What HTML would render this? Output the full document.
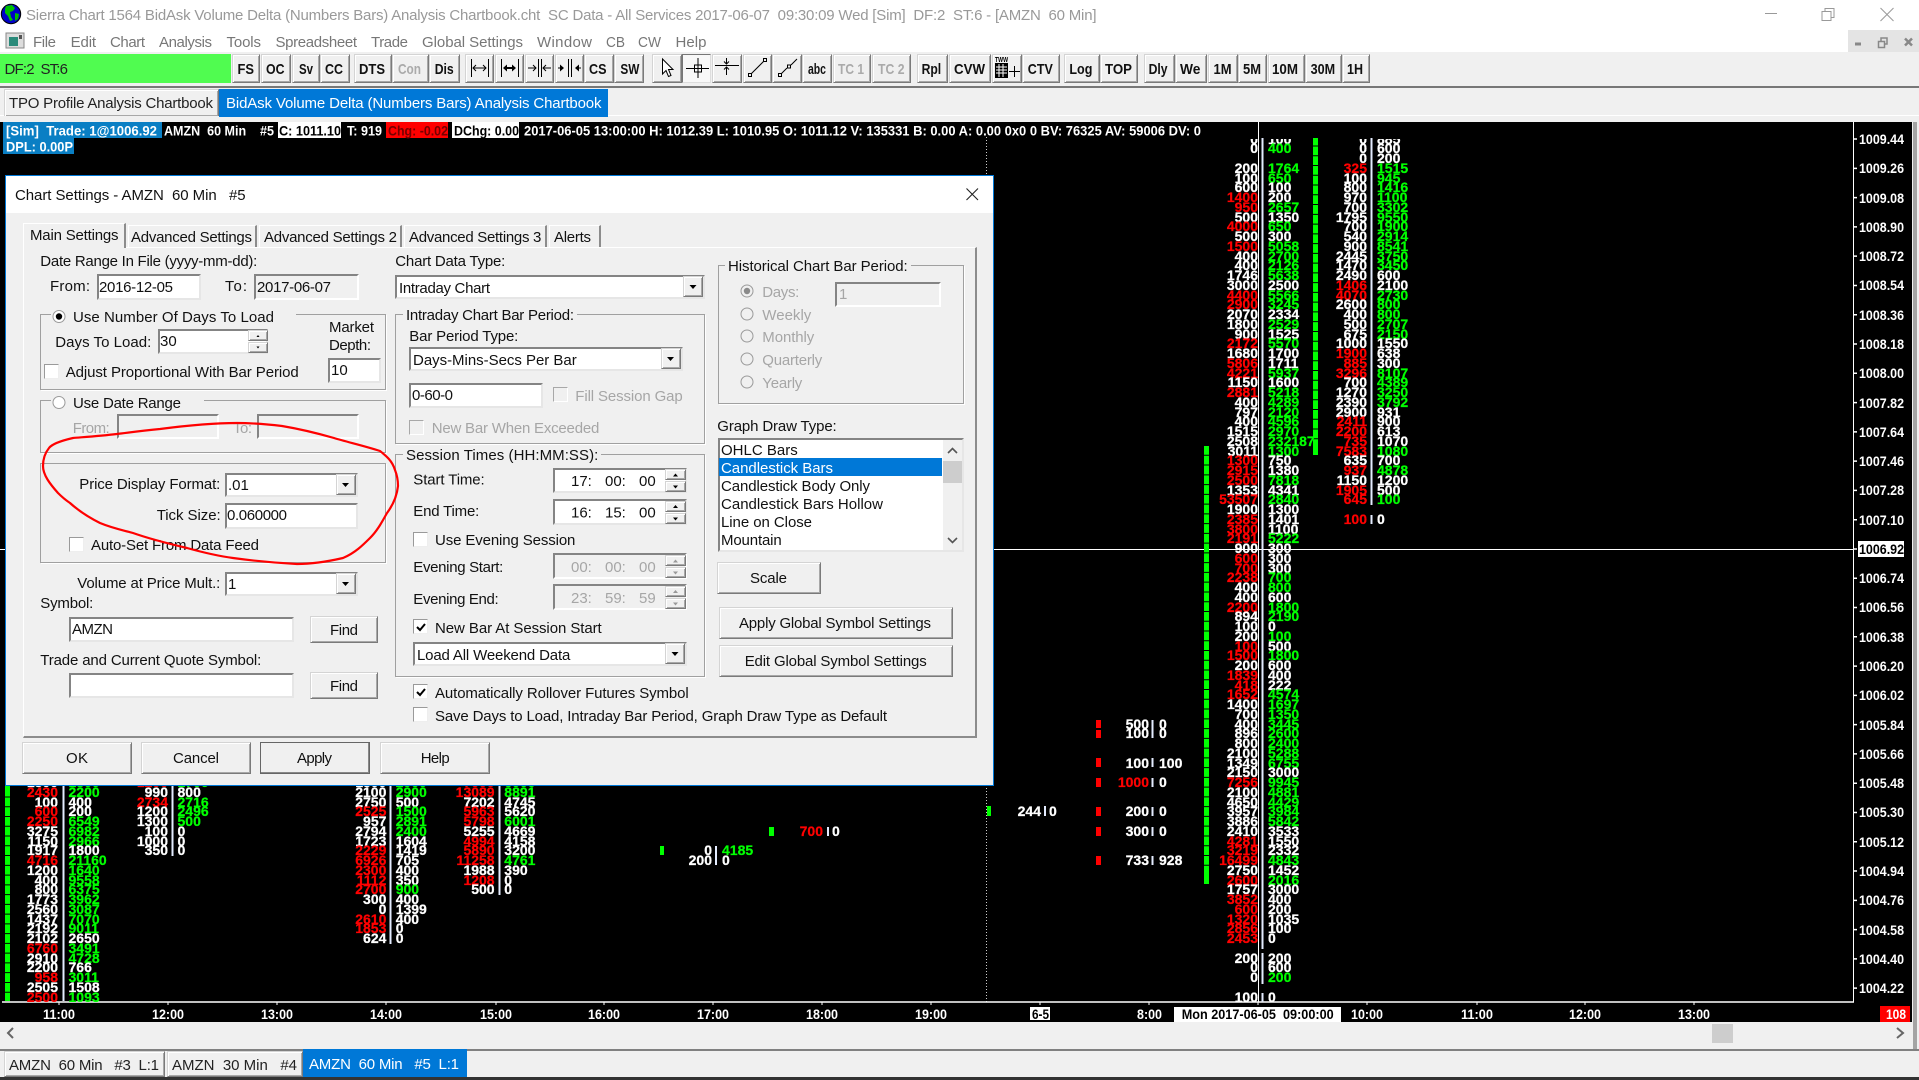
<!DOCTYPE html>
<html><head><meta charset="utf-8"><title>Sierra Chart</title>
<style>
html,body{margin:0;padding:0}
body{width:1919px;height:1080px;overflow:hidden;background:#f0f0f0;position:relative;font-family:"Liberation Sans",sans-serif}
div,svg,pre{position:absolute;box-sizing:border-box;margin:0}
svg{left:0;top:0}
svg text{white-space:pre}
.b{background:#f0f0f0;border:1px solid;border-color:#d4d4d4 #7a7a7a #7a7a7a #d4d4d4;box-shadow:inset 1px 1px 0 #fff,inset -1px -1px 0 #a8a8a8}
.i{background:#fff;border:2px solid;border-color:#848484 #e6e6e6 #e6e6e6 #848484}
.j{background:#f0f0f0;border:2px solid;border-color:#848484 #fff #fff #848484}
.g{border:1px solid #a0a0a0;box-shadow:1px 1px 0 #fff}
.f{background:#f0f0f0}
.c{background:#fff;border:1px solid;border-color:#9a9a9a #eee #eee #9a9a9a;width:15px;height:15px}
.x{background:#f0f0f0;border:1px solid;border-color:#a8a8a8 #fff #fff #a8a8a8;width:15px;height:15px}
.k{background:#fff;width:2px}
pre{font:bold 14px/9.75px "Liberation Sans",sans-serif;color:#fff;white-space:pre;-webkit-text-stroke:.25px currentColor}
pre.r{width:80px;text-align:right}
pre i{font-style:normal;color:#f00}
pre b{color:#0f0}
.t{font:bold 15px "Liberation Sans",sans-serif;fill:#111}
.s{font:bold 14px "Liberation Sans",sans-serif;fill:#fff}
.u{font:15px "Liberation Sans",sans-serif;fill:#111}
.u.d{fill:#a6a6a6}
</style></head><body>

<!-- chrome background -->
<div style="left:0;top:0;width:1919px;height:52px;background:#fff"></div>
<div style="left:1848px;top:30px;width:71px;height:22px;background:#e4e4e4"></div>
<div style="left:0;top:86px;width:1919px;height:2px;background:#777"></div>
<div style="left:0;top:115px;width:1919px;height:1px;background:#fff"></div>
<div style="left:0;top:54px;width:231px;height:29px;background:#50fc50"></div>

<!-- toolbar buttons -->
<div class="b" style="left:232px;top:54px;width:28px;height:29px"></div>
<div class="b" style="left:261px;top:54px;width:30px;height:29px"></div>
<div class="b" style="left:292px;top:54px;width:28px;height:29px"></div>
<div class="b" style="left:320px;top:54px;width:30px;height:29px"></div>
<div class="b" style="left:354px;top:54px;width:38px;height:29px"></div>
<div class="b" style="left:392px;top:54px;width:37px;height:29px"></div>
<div class="b" style="left:429px;top:54px;width:31px;height:29px"></div>
<div class="b" style="left:465px;top:54px;width:29px;height:29px"></div>
<div class="b" style="left:495px;top:54px;width:29px;height:29px"></div>
<div class="b" style="left:525px;top:54px;width:29px;height:29px"></div>
<div class="b" style="left:555px;top:54px;width:29px;height:29px"></div>
<div class="b" style="left:584px;top:54px;width:30px;height:29px"></div>
<div class="b" style="left:614px;top:54px;width:30px;height:29px"></div>
<div class="b" style="left:652px;top:54px;width:30px;height:29px"></div>
<div style="left:682px;top:54px;width:29px;height:29px;background:#f8f8f8;border:1px solid;border-color:#777 #ddd #ddd #777"></div>
<div class="b" style="left:712px;top:54px;width:30px;height:29px"></div>
<div class="b" style="left:743px;top:54px;width:29px;height:29px"></div>
<div class="b" style="left:772px;top:54px;width:30px;height:29px"></div>
<div class="b" style="left:802px;top:54px;width:30px;height:29px"></div>
<div class="b" style="left:833px;top:54px;width:38px;height:29px"></div>
<div class="b" style="left:872px;top:54px;width:39px;height:29px"></div>
<div class="b" style="left:917px;top:54px;width:31px;height:29px"></div>
<div class="b" style="left:949px;top:54px;width:42px;height:29px"></div>
<div class="b" style="left:992px;top:54px;width:30px;height:29px"></div>
<div class="b" style="left:1022px;top:54px;width:38px;height:29px"></div>
<div class="b" style="left:1064px;top:54px;width:36px;height:29px"></div>
<div class="b" style="left:1100px;top:54px;width:38px;height:29px"></div>
<div class="b" style="left:1144px;top:54px;width:31px;height:29px"></div>
<div class="b" style="left:1175px;top:54px;width:32px;height:29px"></div>
<div class="b" style="left:1208px;top:54px;width:30px;height:29px"></div>
<div class="b" style="left:1238px;top:54px;width:29px;height:29px"></div>
<div class="b" style="left:1268px;top:54px;width:37px;height:29px"></div>
<div class="b" style="left:1305px;top:54px;width:37px;height:29px"></div>
<div class="b" style="left:1342px;top:54px;width:28px;height:29px"></div>

<!-- chartbook tabs -->
<div class="b" style="left:4px;top:89px;width:215px;height:27px;border-bottom:0"></div>
<div style="left:219px;top:89px;width:389px;height:28px;background:#0078d7"></div>

<!-- chart -->
<div style="left:0;top:122px;width:1912px;height:900px;background:#000"></div>
<div style="left:1913px;top:122px;width:4px;height:927px;background:#a4a4a4"></div>

<svg width="1919" height="1080" style="left:0;top:0">
<rect x="3" y="122" width="159" height="16" fill="#0a7fc4"/>
<rect x="3" y="138" width="71" height="16" fill="#0a7fc4"/>
<rect x="278" y="122" width="63" height="16" fill="#fff"/>
<rect x="386" y="122" width="62" height="16" fill="#f00"/>
<rect x="452" y="122" width="67" height="16" fill="#fff"/>
<!-- grid lines -->
<line x1="986.5" y1="137" x2="986.5" y2="1002" stroke="#ccc" stroke-dasharray="1 2"/>
<line x1="0" y1="549.5" x2="1853" y2="549.5" stroke="#fff"/>
<line x1="1258.5" y1="122" x2="1258.5" y2="1002" stroke="#fff"/>
<line x1="1853.5" y1="122" x2="1853.5" y2="1002" stroke="#fff"/>
<line x1="2" y1="1002" x2="1854" y2="1002" stroke="#fff" stroke-width="1.5"/>
<line x1="1855" y1="138.3" x2="1855" y2="1000" stroke="#fff" stroke-width="4" stroke-dasharray="1.5 27.78"/>
<!-- x ticks -->
<path d="M59 1002v3M168 1002v3M277 1002v3M386 1002v3M496 1002v3M604 1002v3M713 1002v3M822 1002v3M931 1002v3M1040 1002v3M1149 1002v3M1258 1002v3M1367 1002v3M1477 1002v3M1585 1002v3M1694 1002v3" stroke="#fff"/>
<!-- bars -->
<rect x="1204" y="446" width="5" height="438" fill="#0f0"/>
<path d="M1204 455.3h5m-5 9.76h5m-5 9.76h5m-5 9.76h5m-5 9.76h5m-5 9.76h5m-5 9.76h5m-5 9.76h5m-5 9.76h5m-5 9.76h5m-5 9.76h5m-5 9.76h5m-5 9.76h5m-5 9.76h5m-5 9.76h5m-5 9.76h5m-5 9.76h5m-5 9.76h5m-5 9.76h5m-5 9.76h5m-5 9.76h5m-5 9.76h5m-5 9.76h5m-5 9.76h5m-5 9.76h5m-5 9.76h5m-5 9.76h5m-5 9.76h5m-5 9.76h5m-5 9.76h5m-5 9.76h5m-5 9.76h5m-5 9.76h5m-5 9.76h5m-5 9.76h5m-5 9.76h5m-5 9.76h5m-5 9.76h5m-5 9.76h5m-5 9.76h5m-5 9.76h5m-5 9.76h5m-5 9.76h5" stroke="#000"/>
<rect x="1313" y="138" width="5" height="317" fill="#0f0"/>
<path d="M1313 146h5m-5 9.76h5m-5 9.76h5m-5 9.76h5m-5 9.76h5m-5 9.76h5m-5 9.76h5m-5 9.76h5m-5 9.76h5m-5 9.76h5m-5 9.76h5m-5 9.76h5m-5 9.76h5m-5 9.76h5m-5 9.76h5m-5 9.76h5m-5 9.76h5m-5 9.76h5m-5 9.76h5m-5 9.76h5m-5 9.76h5m-5 9.76h5m-5 9.76h5m-5 9.76h5m-5 9.76h5m-5 9.76h5m-5 9.76h5m-5 9.76h5m-5 9.76h5m-5 9.76h5m-5 9.76h5" stroke="#000"/>
<rect x="5" y="786" width="5" height="215" fill="#0f0"/>
<path d="M5 797h5m-5 9.76h5m-5 9.76h5m-5 9.76h5m-5 9.76h5m-5 9.76h5m-5 9.76h5m-5 9.76h5m-5 9.76h5m-5 9.76h5m-5 9.76h5m-5 9.76h5m-5 9.76h5m-5 9.76h5m-5 9.76h5m-5 9.76h5m-5 9.76h5m-5 9.76h5m-5 9.76h5m-5 9.76h5m-5 9.76h5" stroke="#000"/>
<rect x="1096" y="720" width="5" height="8" fill="#f00"/><rect x="1096" y="730" width="5" height="8" fill="#f00"/><rect x="1096" y="758" width="5" height="9" fill="#f00"/><rect x="1096" y="778" width="5" height="9" fill="#f00"/><rect x="1096" y="807" width="5" height="9" fill="#f00"/><rect x="1096" y="827" width="5" height="9" fill="#f00"/><rect x="1096" y="856" width="5" height="9" fill="#f00"/>
<rect x="987" y="806" width="4" height="10" fill="#0f0"/>
<rect x="769" y="827" width="5" height="9" fill="#0f0"/>
<rect x="660" y="846" width="4" height="9" fill="#0f0"/>
<!-- separators -->
<path d="M1262.5 138V949M1262.5 953V984M1262.5 993V1002M1371.5 138V505M1371.5 515V524M1152.5 720V738M1152.5 758V767M1152.5 778V787M1152.5 807V816M1152.5 827V836M1152.5 856V865M63.5 786V1001M172.5 786V856M390.5 786V944M499.5 786V895M1045 806V816M828 827V836M716 846V865" stroke="#e4ecff" stroke-width="2" fill="none"/>
</svg>

<!-- chart numbers -->
<div style="left:0;top:138.5px;width:1853px;height:863.5px;overflow:hidden">
<pre class="r" style="left:1178px;top:-3.875px">0
0

200
100
600
<i>1400</i>
<i>950</i>
500
<i>4000</i>
500
<i>1500</i>
400
400
1746
3000
<i>4400</i>
<i>2900</i>
2070
1800
900
<i>2172</i>
1680
<i>5806</i>
<i>4221</i>
1150
<i>2881</i>
400
797
400
1515
2508
3011
<i>1300</i>
<i>2915</i>
<i>2500</i>
1353
<i>53507</i>
1900
<i>2385</i>
<i>3800</i>
<i>2191</i>
900
<i>600</i>
<i>700</i>
<i>2238</i>
400
400
<i>2200</i>
894
100
200
<i>100</i>
<i>1500</i>
200
<i>1839</i>
<i>418</i>
<i>1652</i>
1400
700
400
896
800
2100
1349
2150
<i>7256</i>
2100
4650
3957
3886
2410
<i>4281</i>
<i>3219</i>
<i>16499</i>
2750
<i>2600</i>
1757
<i>3852</i>
<i>600</i>
<i>1320</i>
<i>2856</i>
<i>2453</i>

200
0
0

100</pre>
<pre style="left:1268px;top:-3.875px">100
<b>400</b>

<b>1764</b>
<b>650</b>
100
200
<b>2657</b>
1350
<b>650</b>
300
<b>5058</b>
<b>2700</b>
<b>2126</b>
<b>5638</b>
2500
<b>5566</b>
<b>3245</b>
2334
<b>2529</b>
1525
<b>5570</b>
1700
1711
<b>5937</b>
1600
<b>5218</b>
<b>4289</b>
<b>2120</b>
<b>4596</b>
<b>2970</b>
<b>232187</b>
<b>1300</b>
750
1380
<b>7818</b>
4341
<b>2840</b>
1300
1401
1100
<b>5222</b>
300
300
300
<b>700</b>
<b>800</b>
600
<b>1800</b>
<b>2190</b>
0
<b>100</b>
500
<b>1800</b>
600
400
222
<b>4574</b>
<b>1697</b>
<b>1350</b>
<b>3445</b>
<b>2600</b>
<b>2400</b>
<b>5288</b>
<b>6755</b>
3000
<b>9945</b>
<b>4881</b>
<b>4429</b>
<b>3984</b>
<b>5842</b>
3533
1550
2332
<b>4843</b>
1452
<b>2016</b>
3000
400
200
1035
100
0

200
600
<b>200</b>

0</pre>
<pre class="r" style="left:1287px;top:-3.875px">0
0
0
<i>325</i>
100
800
970
700
1795
700
540
900
2445
1470
2490
<i>1406</i>
<i>4070</i>
2600
400
500
675
1000
<i>1900</i>
<i>885</i>
<i>3296</i>
700
1270
2390
2900
<i>2411</i>
<i>2200</i>
<i>735</i>
<i>7583</i>
635
<i>937</i>
1150
<i>1905</i>
<i>645</i>

<i>100</i></pre>
<pre style="left:1377px;top:-3.875px">885
600
200
<b>1515</b>
<b>945</b>
<b>1416</b>
<b>1100</b>
<b>3302</b>
<b>9550</b>
<b>1900</b>
<b>2914</b>
<b>8541</b>
<b>3750</b>
<b>3450</b>
600
2100
<b>2730</b>
<b>800</b>
<b>800</b>
<b>2707</b>
<b>2150</b>
1550
638
300
<b>8107</b>
<b>4389</b>
<b>3250</b>
<b>3792</b>
931
900
613
1070
<b>1080</b>
700
<b>4878</b>
1200
500
<b>100</b>

0</pre>
<pre class="r" style="left:1069px;top:581.1px">500
100


100

<i>1000</i>


200

300


733</pre>
<pre style="left:1159px;top:581.1px">0
0


100

0


0

0


928</pre>
<pre class="r" style="left:-22px;top:639.6px">1500
<i>2430</i>
100
<i>600</i>
<i>2250</i>
3275
1150
1917
<i>4716</i>
1200
400
800
1773
2560
1437
2192
2102
<i>6760</i>
2910
2200
<i>958</i>
2505
<i>2500</i></pre>
<pre style="left:68.5px;top:639.6px"><b>1800</b>
<b>2200</b>
400
200
<b>6549</b>
<b>6982</b>
<b>2966</b>
1800
<b>21160</b>
<b>1640</b>
<b>9558</b>
<b>6375</b>
<b>3962</b>
<b>3087</b>
<b>7070</b>
<b>9011</b>
2650
<b>3491</b>
<b>4728</b>
766
<b>3011</b>
1508
<b>1093</b></pre>
<pre class="r" style="left:88px;top:639.6px"><i>1200</i>
990
<i>2734</i>
1200
1300
100
1000
350</pre>
<pre style="left:177.5px;top:639.6px"><b>1700</b>
800
<b>2716</b>
<b>2496</b>
<b>500</b>
0
0
0</pre>
<pre class="r" style="left:306.4px;top:639.6px">1500
2100
2750
<i>2525</i>
957
2794
1723
<i>2229</i>
<i>6926</i>
<i>2300</i>
<i>1112</i>
<i>2700</i>
300
0
<i>2610</i>
<i>1853</i>
624</pre>
<pre style="left:395.7px;top:639.6px"><b>2900</b>
<b>2900</b>
500
<b>1500</b>
<b>2891</b>
<b>2400</b>
1604
1419
705
400
350
<b>900</b>
400
1399
400
0
0</pre>
<pre class="r" style="left:414.6px;top:639.6px"><i>7000</i>
<i>13089</i>
7202
<i>5963</i>
<i>5798</i>
5255
<i>4994</i>
<i>5890</i>
<i>11258</i>
1988
<i>1208</i>
500</pre>
<pre style="left:504.3px;top:639.6px"><b>6000</b>
<b>8891</b>
4745
5620
<b>6001</b>
4669
4158
3200
<b>4761</b>
390
0
0</pre>
<pre class="r" style="left:961px;top:668.9px">244</pre>
<pre style="left:1049px;top:668.9px">0</pre>
<pre class="r" style="left:743px;top:688.4px"><i>700</i></pre>
<pre style="left:832px;top:688.4px">0</pre>
<pre class="r" style="left:632px;top:707.9px">0
200</pre>
<pre style="left:722px;top:707.9px"><b>4185</b>
0</pre>
</div>

<!-- lower boxes -->
<div style="left:0;top:1049px;width:1919px;height:2px;background:#808080"></div>
<div style="left:0;top:1077px;width:1919px;height:3px;background:#333"></div>
<div class="b" style="left:4px;top:1051px;width:161px;height:26px"></div>
<div class="b" style="left:167px;top:1051px;width:136px;height:26px"></div>
<div style="left:303px;top:1049px;width:164px;height:28px;background:#0078d7"></div>
<div style="left:1712px;top:1024px;width:21px;height:19px;background:#cdcdcd"></div>

<!-- dialog -->
<div style="left:5px;top:175px;width:989px;height:611px;background:#f0f0f0;border:1px solid #0078d7"></div>
<div style="left:6px;top:176px;width:987px;height:37px;background:#fff"></div>
<div style="left:23px;top:247px;width:954px;height:491px;border:1px solid #fff;border-right:2px solid #8c8c8c;border-bottom:2px solid #8c8c8c"></div>
<div class="f" style="left:23px;top:223px;width:103px;height:25px;border:1px solid #fff;border-right:2px solid #8c8c8c;border-bottom:0"></div>
<div class="f" style="left:128px;top:225px;width:129px;height:22px;border:1px solid #fff;border-right:2px solid #8c8c8c;border-bottom:0"></div>
<div class="f" style="left:259px;top:225px;width:143px;height:22px;border:1px solid #fff;border-right:2px solid #8c8c8c;border-bottom:0"></div>
<div class="f" style="left:404px;top:225px;width:143px;height:22px;border:1px solid #fff;border-right:2px solid #8c8c8c;border-bottom:0"></div>
<div class="f" style="left:549px;top:225px;width:52px;height:22px;border:1px solid #fff;border-right:2px solid #8c8c8c;border-bottom:0"></div>

<!-- groups -->
<div class="g" style="left:40px;top:314px;width:346px;height:76px"></div>
<div class="f" style="left:51px;top:310px;width:245px;height:10px"></div>
<div class="g" style="left:40px;top:400px;width:346px;height:53px"></div>
<div class="f" style="left:51px;top:396px;width:153px;height:10px"></div>
<div class="g" style="left:40px;top:463px;width:346px;height:100px"></div>
<div class="g" style="left:395px;top:314px;width:310px;height:130px"></div>
<div class="f" style="left:403px;top:308px;width:174px;height:12px"></div>
<div class="g" style="left:395px;top:454px;width:310px;height:223px"></div>
<div class="f" style="left:403px;top:448px;width:198px;height:12px"></div>
<div class="g" style="left:718px;top:265px;width:246px;height:139px"></div>
<div class="f" style="left:725px;top:259px;width:186px;height:12px"></div>

<!-- inputs left -->
<div class="i" style="left:97px;top:274px;width:104px;height:26px"></div>
<div class="j" style="left:254px;top:274px;width:105px;height:26px"></div>
<div class="i" style="left:158px;top:329px;width:110px;height:25px"></div>
<div class="b" style="left:248px;top:330px;width:20px;height:11px"></div>
<div class="b" style="left:248px;top:342px;width:20px;height:11px"></div>
<div class="i" style="left:328px;top:358px;width:53px;height:25px"></div>
<div class="c" style="left:44px;top:364px"></div>
<div class="j" style="left:117px;top:414px;width:102px;height:25px"></div>
<div class="j" style="left:257px;top:414px;width:102px;height:25px"></div>
<div class="i" style="left:225px;top:473px;width:133px;height:24px"></div>
<div class="b" style="left:336px;top:474px;width:20px;height:21px"></div>
<div class="i" style="left:225px;top:503px;width:133px;height:26px"></div>
<div class="c" style="left:69px;top:537px"></div>
<div class="i" style="left:225px;top:572px;width:133px;height:24px"></div>
<div class="b" style="left:336px;top:573px;width:20px;height:21px"></div>
<div class="i" style="left:69px;top:617px;width:225px;height:25px"></div>
<div class="b" style="left:310px;top:616px;width:68px;height:27px"></div>
<div class="i" style="left:69px;top:673px;width:225px;height:25px"></div>
<div class="b" style="left:310px;top:672px;width:68px;height:27px"></div>

<!-- inputs middle -->
<div class="i" style="left:395px;top:275px;width:310px;height:24px"></div>
<div class="b" style="left:683px;top:276px;width:20px;height:21px"></div>
<div class="i" style="left:409px;top:347px;width:274px;height:24px"></div>
<div class="b" style="left:661px;top:348px;width:20px;height:21px"></div>
<div class="i" style="left:409px;top:383px;width:134px;height:25px"></div>
<div class="x" style="left:553px;top:387px"></div>
<div class="x" style="left:409px;top:420px"></div>

<div class="i" style="left:553px;top:468px;width:134px;height:25px"></div>
<div class="b" style="left:665px;top:469px;width:21px;height:11px"></div>
<div class="b" style="left:665px;top:481px;width:21px;height:11px"></div>
<div class="i" style="left:553px;top:499px;width:134px;height:26px"></div>
<div class="b" style="left:665px;top:501px;width:21px;height:11px"></div>
<div class="b" style="left:665px;top:513px;width:21px;height:11px"></div>
<div class="c" style="left:413px;top:532px"></div>
<div class="j" style="left:553px;top:553px;width:134px;height:26px"></div>
<div class="b" style="left:665px;top:555px;width:21px;height:11px"></div>
<div class="b" style="left:665px;top:567px;width:21px;height:11px"></div>
<div class="j" style="left:553px;top:584px;width:134px;height:26px"></div>
<div class="b" style="left:665px;top:586px;width:21px;height:11px"></div>
<div class="b" style="left:665px;top:598px;width:21px;height:11px"></div>
<div class="c" style="left:413px;top:619px"></div>
<div class="i" style="left:413px;top:642px;width:274px;height:24px"></div>
<div class="b" style="left:665px;top:643px;width:20px;height:21px"></div>
<div class="c" style="left:413px;top:684px"></div>
<div class="c" style="left:413px;top:707px"></div>

<!-- right column -->
<div class="j" style="left:835px;top:282px;width:106px;height:25px"></div>
<div class="i" style="left:718px;top:438px;width:246px;height:114px"></div>
<div style="left:719px;top:458px;width:223px;height:18px;background:#0078d7"></div>
<div style="left:943px;top:440px;width:19px;height:110px;background:#f0f0f0"></div>
<div style="left:943px;top:461px;width:19px;height:22px;background:#cdcdcd"></div>
<div class="b" style="left:717px;top:562px;width:104px;height:32px"></div>
<div class="b" style="left:719px;top:607px;width:234px;height:32px"></div>
<div class="b" style="left:719px;top:645px;width:234px;height:32px"></div>

<!-- dialog buttons -->
<div class="b" style="left:22px;top:742px;width:110px;height:32px"></div>
<div class="b" style="left:141px;top:742px;width:110px;height:32px"></div>
<div class="b" style="left:260px;top:742px;width:110px;height:32px;border:1px solid #666;box-shadow:inset -1px -1px 0 #888"></div>
<div class="b" style="left:380px;top:742px;width:110px;height:32px"></div>

<svg width="1919" height="1080">
<!-- globe -->
<circle cx="11" cy="14" r="9.7" fill="#0000c8" stroke="#000"/>
<path d="M6 6l6-1 3 3-2 3-3 1 1 5 2 3-3 1-2-5-3-3 0-4zM15 13l4 1-1 5-3 2z" fill="#00c000"/>
<!-- menu icon -->
<rect x="6" y="33" width="18" height="15" fill="#ddd" stroke="#888"/><rect x="9" y="37" width="9" height="9" fill="#2a8a7a"/><rect x="19" y="35" width="3" height="4" fill="#555"/>

<text x="26" y="20" textLength="1070.5" fill="#999" style="font-size:15px">Sierra Chart 1564 BidAsk Volume Delta (Numbers Bars) Analysis Chartbook.cht  SC Data - All Services 2017-06-07  09:30:09 Wed [Sim]  DF:2  ST:6 - [AMZN  60 Min]</text>
<g fill="#777" style="font-size:15px">
<text x="33" y="47" textLength="23">File</text><text x="70.6" y="47" textLength="25.5">Edit</text><text x="110" y="47" textLength="35">Chart</text><text x="159" y="47" textLength="53">Analysis</text><text x="226.5" y="47" textLength="34.5">Tools</text><text x="275.5" y="47" textLength="81.5">Spreadsheet</text><text x="371" y="47" textLength="37">Trade</text><text x="422" y="47" textLength="101">Global Settings</text><text x="537" y="47" textLength="55">Window</text><text x="606" y="47" textLength="19" lengthAdjust="spacingAndGlyphs">CB</text><text x="638" y="47" textLength="23" lengthAdjust="spacingAndGlyphs">CW</text><text x="675.5" y="47" textLength="31">Help</text>
</g>
<!-- window controls -->
<path d="M1765 13.5h12" stroke="#999" fill="none"/>
<path d="M1822 11.5h9v9h-9zM1825 11.5v-3h9v9h-3" stroke="#999" fill="none"/>
<path d="M1880.5 8l13 13M1893.5 8l-13 13" stroke="#999" fill="none"/>
<path d="M1855 44h6" stroke="#888" stroke-width="3"/>
<path d="M1878.5 41.5h6v6h-6zM1881 41v-3h6v6h-2" stroke="#888" stroke-width="1.5" fill="none"/>
<path d="M1905 38.5l7 7M1912 38.5l-7 7" stroke="#888" stroke-width="2.5"/>

<g transform="translate(0,-1)">
<text x="4.5" y="75" textLength="63.5" fill="#222" style="font-size:15px">DF:2  ST:6</text>
<!-- toolbar labels -->
<g class="t">
<text class="t" x="237.5" y="75" textLength="16.5" lengthAdjust="spacingAndGlyphs">FS</text>
<text class="t" x="266" y="75" textLength="18.5" lengthAdjust="spacingAndGlyphs">OC</text>
<text class="t" x="299" y="75" textLength="14" lengthAdjust="spacingAndGlyphs">Sv</text>
<text class="t" x="325" y="75" textLength="18" lengthAdjust="spacingAndGlyphs">CC</text>
<text class="t" x="359" y="75" textLength="26" lengthAdjust="spacingAndGlyphs">DTS</text>
<text class="t" x="398" y="75" textLength="23" lengthAdjust="spacingAndGlyphs" style="fill:#aaa">Con</text>
<text class="t" x="434.7" y="75" textLength="19" lengthAdjust="spacingAndGlyphs">Dis</text>
<text class="t" x="589" y="75" textLength="17.5" lengthAdjust="spacingAndGlyphs">CS</text>
<text class="t" x="620.4" y="75" textLength="19" lengthAdjust="spacingAndGlyphs">SW</text>
<text class="t" x="808" y="75" textLength="18" lengthAdjust="spacingAndGlyphs">abc</text>
<text class="t" x="838" y="75" textLength="26" lengthAdjust="spacingAndGlyphs" style="fill:#aaa">TC 1</text>
<text class="t" x="878" y="75" textLength="26.5" lengthAdjust="spacingAndGlyphs" style="fill:#aaa">TC 2</text>
<text class="t" x="921.6" y="75" textLength="19.6" lengthAdjust="spacingAndGlyphs">Rpl</text>
<text class="t" x="954" y="75" textLength="31" lengthAdjust="spacingAndGlyphs">CVW</text>
<text class="t" x="1027.8" y="75" textLength="25" lengthAdjust="spacingAndGlyphs">CTV</text>
<text class="t" x="1069.4" y="75" textLength="23" lengthAdjust="spacingAndGlyphs">Log</text>
<text class="t" x="1105" y="75" textLength="27" lengthAdjust="spacingAndGlyphs">TOP</text>
<text class="t" x="1148.6" y="75" textLength="19" lengthAdjust="spacingAndGlyphs">Dly</text>
<text class="t" x="1180" y="75" textLength="20.4" lengthAdjust="spacingAndGlyphs">We</text>
<text class="t" x="1213.5" y="75" textLength="18" lengthAdjust="spacingAndGlyphs">1M</text>
<text class="t" x="1243" y="75" textLength="18" lengthAdjust="spacingAndGlyphs">5M</text>
<text class="t" x="1272" y="75" textLength="26" lengthAdjust="spacingAndGlyphs">10M</text>
<text class="t" x="1310.6" y="75" textLength="24.5" lengthAdjust="spacingAndGlyphs">30M</text>
<text class="t" x="1347" y="75" textLength="16" lengthAdjust="spacingAndGlyphs">1H</text>
</g>
<!-- toolbar icons -->
<g stroke="#000" fill="none">
<path d="M471.5 60v18M488.5 60v18M473 69h13M476 66l-3 3 3 3M483 66l3 3-3 3"/>
<path d="M501.5 60v18M518.5 60v18M507 69h5"/>
<path d="M538.5 60v18M541.5 60v18M528 69h8M533 66l3 3-3 3M551 69h-8M546 66l-3 3 3 3"/>
<path d="M568.5 60v18M571.5 60v18M558 69h5M581 69h-5"/>
<path d="M662.5 60v15l3.5-3.5 2.5 6 2.5-1-2.5-6h4.5z" fill="#fff"/>
<path d="M698 59v20M686 69.5h23"/><rect x="694.5" y="66" width="7" height="7"/>
<path d="M715 66.5h24M726.5 59v6M724 62.5l2.5 2.5 2.5-2.5M726.5 76v-8M724 70.5l2.5-2.5 2.5 2.5"/>
<path d="M751 75L764 62"/><rect x="748.5" y="74.5" width="3" height="3"/><rect x="763.5" y="59.5" width="3" height="3"/>
<path d="M781 75l6-6M791 66l6-6"/><rect x="778.5" y="74.5" width="3" height="3"/><rect x="787.5" y="66" width="3" height="3"/>
<path d="M1009 72.5h11M1014.5 67v11"/>
<rect x="995.5" y="64.5" width="12" height="14" fill="#000"/>
<path d="M996 68h11M996 71h11M996 74h11M999 65v13M1003 65v13" stroke="#fff"/>
</g>
<path d="M503 69l4-3.5v7zM516 69l-4-3.5v7zM564 69l-4-3.5v7zM575 69l4-3.5v7z" fill="#000"/>
<rect x="507" y="68" width="5" height="2"/>
<rect x="560" y="68" width="3" height="2"/>
<text x="995" y="63" style="font:bold 7px 'Liberation Sans'" textLength="13" lengthAdjust="spacingAndGlyphs">TWW</text>
</g>

<!-- chartbook tabs -->
<text x="9" y="108" textLength="204" fill="#222" style="font-size:15px">TPO Profile Analysis Chartbook</text>
<text x="226" y="108" textLength="375.5" fill="#fff" style="font-size:15px">BidAsk Volume Delta (Numbers Bars) Analysis Chartbook</text>

<!-- status line -->
<g class="s">
<text class="s" x="6" y="135.5" textLength="151" lengthAdjust="spacingAndGlyphs">[Sim]  Trade: 1@1006.92</text>
<text class="s" x="164" y="135.5" textLength="110" lengthAdjust="spacingAndGlyphs">AMZN  60 Min    #5</text>
<text class="s" x="279" y="135.5" textLength="62" lengthAdjust="spacingAndGlyphs" style="fill:#000">C: 1011.10</text>
<text class="s" x="347" y="135.5" textLength="35" lengthAdjust="spacingAndGlyphs">T: 919</text>
<text class="s" x="388" y="135.5" textLength="60" lengthAdjust="spacingAndGlyphs" style="fill:#700">Chg: -0.02</text>
<text class="s" x="454" y="135.5" textLength="65" lengthAdjust="spacingAndGlyphs" style="fill:#000">DChg: 0.00</text>
<text class="s" x="524" y="135.5" textLength="677" lengthAdjust="spacingAndGlyphs">2017-06-05 13:00:00 H: 1012.39 L: 1010.95 O: 1011.12 V: 135331 B: 0.00 A: 0.00 0x0 0 BV: 76325 AV: 59006 DV: 0</text>
<text class="s" x="6" y="151.5" textLength="67" lengthAdjust="spacingAndGlyphs">DPL: 0.00P</text>
</g>

<!-- price scale -->
<rect x="1858" y="541" width="46" height="16" fill="#fff"/>
<g>
<text class="s" x="1859" y="144" textLength="45" lengthAdjust="spacingAndGlyphs">1009.44</text>
<text class="s" x="1859" y="173" textLength="45" lengthAdjust="spacingAndGlyphs">1009.26</text>
<text class="s" x="1859" y="203" textLength="45" lengthAdjust="spacingAndGlyphs">1009.08</text>
<text class="s" x="1859" y="232" textLength="45" lengthAdjust="spacingAndGlyphs">1008.90</text>
<text class="s" x="1859" y="261" textLength="45" lengthAdjust="spacingAndGlyphs">1008.72</text>
<text class="s" x="1859" y="290" textLength="45" lengthAdjust="spacingAndGlyphs">1008.54</text>
<text class="s" x="1859" y="320" textLength="45" lengthAdjust="spacingAndGlyphs">1008.36</text>
<text class="s" x="1859" y="349" textLength="45" lengthAdjust="spacingAndGlyphs">1008.18</text>
<text class="s" x="1859" y="378" textLength="45" lengthAdjust="spacingAndGlyphs">1008.00</text>
<text class="s" x="1859" y="408" textLength="45" lengthAdjust="spacingAndGlyphs">1007.82</text>
<text class="s" x="1859" y="437" textLength="45" lengthAdjust="spacingAndGlyphs">1007.64</text>
<text class="s" x="1859" y="466" textLength="45" lengthAdjust="spacingAndGlyphs">1007.46</text>
<text class="s" x="1859" y="495" textLength="45" lengthAdjust="spacingAndGlyphs">1007.28</text>
<text class="s" x="1859" y="525" textLength="45" lengthAdjust="spacingAndGlyphs">1007.10</text>
<text class="s" x="1859" y="554" textLength="45" lengthAdjust="spacingAndGlyphs" style="fill:#000">1006.92</text>
<text class="s" x="1859" y="583" textLength="45" lengthAdjust="spacingAndGlyphs">1006.74</text>
<text class="s" x="1859" y="612" textLength="45" lengthAdjust="spacingAndGlyphs">1006.56</text>
<text class="s" x="1859" y="642" textLength="45" lengthAdjust="spacingAndGlyphs">1006.38</text>
<text class="s" x="1859" y="671" textLength="45" lengthAdjust="spacingAndGlyphs">1006.20</text>
<text class="s" x="1859" y="700" textLength="45" lengthAdjust="spacingAndGlyphs">1006.02</text>
<text class="s" x="1859" y="730" textLength="45" lengthAdjust="spacingAndGlyphs">1005.84</text>
<text class="s" x="1859" y="759" textLength="45" lengthAdjust="spacingAndGlyphs">1005.66</text>
<text class="s" x="1859" y="788" textLength="45" lengthAdjust="spacingAndGlyphs">1005.48</text>
<text class="s" x="1859" y="817" textLength="45" lengthAdjust="spacingAndGlyphs">1005.30</text>
<text class="s" x="1859" y="847" textLength="45" lengthAdjust="spacingAndGlyphs">1005.12</text>
<text class="s" x="1859" y="876" textLength="45" lengthAdjust="spacingAndGlyphs">1004.94</text>
<text class="s" x="1859" y="905" textLength="45" lengthAdjust="spacingAndGlyphs">1004.76</text>
<text class="s" x="1859" y="935" textLength="45" lengthAdjust="spacingAndGlyphs">1004.58</text>
<text class="s" x="1859" y="964" textLength="45" lengthAdjust="spacingAndGlyphs">1004.40</text>
<text class="s" x="1859" y="993" textLength="45" lengthAdjust="spacingAndGlyphs">1004.22</text>
</g>

<!-- time scale -->
<rect x="1030" y="1007" width="20" height="13" fill="#fff"/>
<rect x="1174" y="1007" width="167" height="15" fill="#fff"/>
<rect x="1880" y="1006" width="30" height="16" fill="#f00"/>
<text class="s" x="43" y="1019" textLength="32" lengthAdjust="spacingAndGlyphs">11:00</text>
<text class="s" x="152" y="1019" textLength="32" lengthAdjust="spacingAndGlyphs">12:00</text>
<text class="s" x="261" y="1019" textLength="32" lengthAdjust="spacingAndGlyphs">13:00</text>
<text class="s" x="370" y="1019" textLength="32" lengthAdjust="spacingAndGlyphs">14:00</text>
<text class="s" x="480" y="1019" textLength="32" lengthAdjust="spacingAndGlyphs">15:00</text>
<text class="s" x="588" y="1019" textLength="32" lengthAdjust="spacingAndGlyphs">16:00</text>
<text class="s" x="697" y="1019" textLength="32" lengthAdjust="spacingAndGlyphs">17:00</text>
<text class="s" x="806" y="1019" textLength="32" lengthAdjust="spacingAndGlyphs">18:00</text>
<text class="s" x="915" y="1019" textLength="32" lengthAdjust="spacingAndGlyphs">19:00</text>
<text class="s" x="1032" y="1019" textLength="17" lengthAdjust="spacingAndGlyphs" style="fill:#000">6-5</text>
<text class="s" x="1137" y="1019" textLength="25" lengthAdjust="spacingAndGlyphs">8:00</text>
<text class="s" x="1181.7" y="1019" textLength="152" lengthAdjust="spacingAndGlyphs" style="fill:#000">Mon 2017-06-05  09:00:00</text>
<text class="s" x="1351" y="1019" textLength="32" lengthAdjust="spacingAndGlyphs">10:00</text>
<text class="s" x="1461" y="1019" textLength="32" lengthAdjust="spacingAndGlyphs">11:00</text>
<text class="s" x="1569" y="1019" textLength="32" lengthAdjust="spacingAndGlyphs">12:00</text>
<text class="s" x="1678" y="1019" textLength="32" lengthAdjust="spacingAndGlyphs">13:00</text>
<text class="s" x="1886" y="1019" textLength="20" lengthAdjust="spacingAndGlyphs">108</text>

<!-- scrollbar arrows -->
<path d="M13 1028l-5 5 5 5M1897 1028l6 5-6 5" stroke="#666" stroke-width="2" fill="none"/>

<!-- bottom tabs -->
<text x="9" y="1070" textLength="150" fill="#222" style="font-size:15px">AMZN  60 Min   #3  L:1</text>
<text x="172" y="1070" textLength="125" fill="#222" style="font-size:15px">AMZN  30 Min   #4</text>
<text x="309" y="1069" textLength="150" fill="#fff" style="font-size:15px">AMZN  60 Min   #5  L:1</text>

<!-- dialog text -->
<g class="u">
<text class="u" x="15" y="200" textLength="230.6">Chart Settings - AMZN  60 Min   #5</text>
<text class="u" x="30" y="240" textLength="88.5">Main Settings</text>
<text class="u" x="131" y="242" textLength="121">Advanced Settings</text>
<text class="u" x="264" y="242" textLength="133">Advanced Settings 2</text>
<text class="u" x="409" y="242" textLength="132.4">Advanced Settings 3</text>
<text class="u" x="554" y="242" textLength="37">Alerts</text>

<text class="u" x="40.3" y="266" textLength="217">Date Range In File (yyyy-mm-dd):</text>
<text class="u" x="50" y="291" textLength="40">From:</text>
<text class="u" x="99" y="292" textLength="74">2016-12-05</text>
<text class="u" x="225" y="291" textLength="22">To:</text>
<text class="u" x="257" y="292" textLength="74">2017-06-07</text>
<text class="u" x="73" y="322" textLength="201">Use Number Of Days To Load</text>
<text class="u" x="55.3" y="347" textLength="96">Days To Load:</text>
<text class="u" x="160" y="346">30</text>
<text class="u" x="329" y="332" textLength="45">Market</text>
<text class="u" x="329" y="350" textLength="42">Depth:</text>
<text class="u" x="331" y="375">10</text>
<text class="u" x="65.7" y="377" textLength="233">Adjust Proportional With Bar Period</text>
<text class="u" x="73" y="408" textLength="108">Use Date Range</text>
<text class="u d" x="72.7" y="433" textLength="37">From:</text>
<text class="u d" x="233" y="433" textLength="19">To:</text>
<text class="u" x="79.3" y="489" textLength="141">Price Display Format:</text>
<text class="u" x="228" y="490">.01</text>
<text class="u" x="156.7" y="520" textLength="64">Tick Size:</text>
<text class="u" x="227" y="520" textLength="60">0.060000</text>
<text class="u" x="91" y="550" textLength="168">Auto-Set From Data Feed</text>
<text class="u" x="77.3" y="588" textLength="143">Volume at Price Mult.:</text>
<text class="u" x="228" y="589">1</text>
<text class="u" x="40.3" y="608" textLength="53">Symbol:</text>
<text class="u" x="72" y="634" textLength="41">AMZN</text>
<text class="u" x="330" y="635" textLength="28">Find</text>
<text class="u" x="40.3" y="665" textLength="221">Trade and Current Quote Symbol:</text>
<text class="u" x="330" y="691" textLength="28">Find</text>
<text class="u" x="66" y="763" textLength="22">OK</text>
<text class="u" x="173" y="763" textLength="46">Cancel</text>
<text class="u" x="297" y="763" textLength="35">Apply</text>
<text class="u" x="420.7" y="763" textLength="29">Help</text>

<text class="u" x="395.3" y="266" textLength="110">Chart Data Type:</text>
<text class="u" x="399" y="293" textLength="91">Intraday Chart</text>
<text class="u" x="406" y="320" textLength="168">Intraday Chart Bar Period:</text>
<text class="u" x="409.3" y="341" textLength="109">Bar Period Type:</text>
<text class="u" x="413" y="365" textLength="163.7">Days-Mins-Secs Per Bar</text>
<text class="u" x="412" y="400" textLength="41">0-60-0</text>
<text class="u d" x="575.3" y="401" textLength="107.4">Fill Session Gap</text>
<text class="u d" x="431.7" y="433" textLength="167.6">New Bar When Exceeded</text>
<text class="u" x="406" y="460" textLength="192.3">Session Times (HH:MM:SS):</text>
<text class="u" x="413.3" y="484.5" textLength="71.4">Start Time:</text>
<text class="u" x="571" y="486">17:</text><text class="u" x="605" y="486">00:</text><text class="u" x="639" y="486">00</text>
<text class="u" x="413.3" y="516" textLength="66">End Time:</text>
<text class="u" x="571" y="517.5">16:</text><text class="u" x="605" y="517.5">15:</text><text class="u" x="639" y="517.5">00</text>
<text class="u" x="435" y="545" textLength="140.4">Use Evening Session</text>
<text class="u" x="413.3" y="572" textLength="90">Evening Start:</text>
<text class="u d" x="571" y="572">00:</text><text class="u d" x="605" y="572">00:</text><text class="u d" x="639" y="572">00</text>
<text class="u" x="413.3" y="604" textLength="85.4">Evening End:</text>
<text class="u d" x="571" y="603">23:</text><text class="u d" x="605" y="603">59:</text><text class="u d" x="639" y="603">59</text>
<text class="u" x="435" y="633" textLength="166.7">New Bar At Session Start</text>
<text class="u" x="417" y="660" textLength="153.3">Load All Weekend Data</text>
<text class="u" x="435" y="698" textLength="253.7">Automatically Rollover Futures Symbol</text>
<text class="u" x="435" y="721" textLength="452">Save Days to Load, Intraday Bar Period, Graph Draw Type as Default</text>

<text class="u" x="728" y="271" textLength="179.7">Historical Chart Bar Period:</text>
<text class="u d" x="762.3" y="297" textLength="37">Days:</text>
<text class="u d" x="762.3" y="320" textLength="49">Weekly</text>
<text class="u d" x="762.3" y="342" textLength="52">Monthly</text>
<text class="u d" x="762.3" y="365" textLength="60">Quarterly</text>
<text class="u d" x="762.3" y="388" textLength="40">Yearly</text>
<text class="u d" x="839" y="299">1</text>
<text class="u" x="717.3" y="431" textLength="119.4">Graph Draw Type:</text>
<text class="u" x="721" y="455" textLength="76.7" style="font-size:15px">OHLC Bars</text>
<text class="u" x="721" y="473" textLength="112" style="fill:#fff">Candlestick Bars</text>
<text class="u" x="721" y="491" textLength="149">Candlestick Body Only</text>
<text class="u" x="721" y="509" textLength="162">Candlestick Bars Hollow</text>
<text class="u" x="721" y="527" textLength="91">Line on Close</text>
<text class="u" x="721" y="545" textLength="60.7">Mountain</text>
<text class="u" x="750" y="583" textLength="37">Scale</text>
<text class="u" x="739" y="628" textLength="192">Apply Global Symbol Settings</text>
<text class="u" x="744.7" y="666" textLength="182">Edit Global Symbol Settings</text>
</g>

<!-- dialog close -->
<path d="M966.5 188.5l11.5 11.5M978 188.5l-11.5 11.5" stroke="#222" stroke-width="1.1" fill="none"/>

<!-- radios -->
<g stroke="#9a9a9a">
<circle cx="59" cy="316.5" r="6" fill="#fff"/>
<circle cx="59" cy="402.5" r="6" fill="#fff"/>
<circle cx="747" cy="291" r="6" fill="#f0f0f0"/>
<circle cx="747" cy="314" r="6" fill="#f0f0f0"/>
<circle cx="747" cy="336" r="6" fill="#f0f0f0"/>
<circle cx="747" cy="359" r="6" fill="#f0f0f0"/>
<circle cx="747" cy="382" r="6" fill="#f0f0f0"/>
</g>
<circle cx="59" cy="316.5" r="3.2" fill="#000"/>
<circle cx="747" cy="291" r="3.2" fill="#8a8a8a"/>

<!-- checks -->
<path d="M417 627l3 3 5-6M417 692l3 3 5-6" stroke="#000" stroke-width="2" fill="none"/>

<!-- combo triangles -->
<path d="M342 483h7l-3.5 4zM342 582h7l-3.5 4zM689.5 285h7l-3.5 4zM667 357h7l-3.5 4zM671.5 652h7l-3.5 4z" fill="#000"/>
<!-- spinners -->
<path d="M256.5 337h3l-1.5-2zM256.5 346.5h3l-1.5 2zM673 476.5h5l-2.5-3zM673 485.5h5l-2.5 3zM673 508h5l-2.5-3zM673 517.5h5l-2.5 3z" fill="#000"/>
<path d="M673 562.5h5l-2.5-3zM673 571.5h5l-2.5 3zM673 593h5l-2.5-3zM673 602.5h5l-2.5 3z" fill="#999"/>
<!-- list arrows -->
<path d="M948 453l4.5-4.5 4.5 4.5M948 538l4.5 4.5 4.5-4.5" stroke="#555" stroke-width="1.6" fill="none"/>

<!-- hand-drawn ellipse -->
<path d="M395 470C392 460 385 455 380 451C365 446 347 442 334 438C320 434 300 429 282 426C265 424 250 423 237 423C215 423 183 426 160 429C140 431 125 433 117 434C100 436 85 437 73 438C60 441 52 444 49 448C45 453 43 459 43 466C43 475 50 484 58 493C63 498 67 501 70 503C80 512 90 518 100 523C112 528 122 530 133 533C150 539 170 544 187 548C205 553 218 556 233 558C255 561 277 563 297 564C315 564 330 561 343 558C355 553 363 545 370 538C378 530 383 520 387 513C393 505 397 495 398 486C398 480 397 475 395 470Z" fill="none" stroke="#f00" stroke-width="2.2" stroke-linejoin="round"/>
</svg>
</body></html>
